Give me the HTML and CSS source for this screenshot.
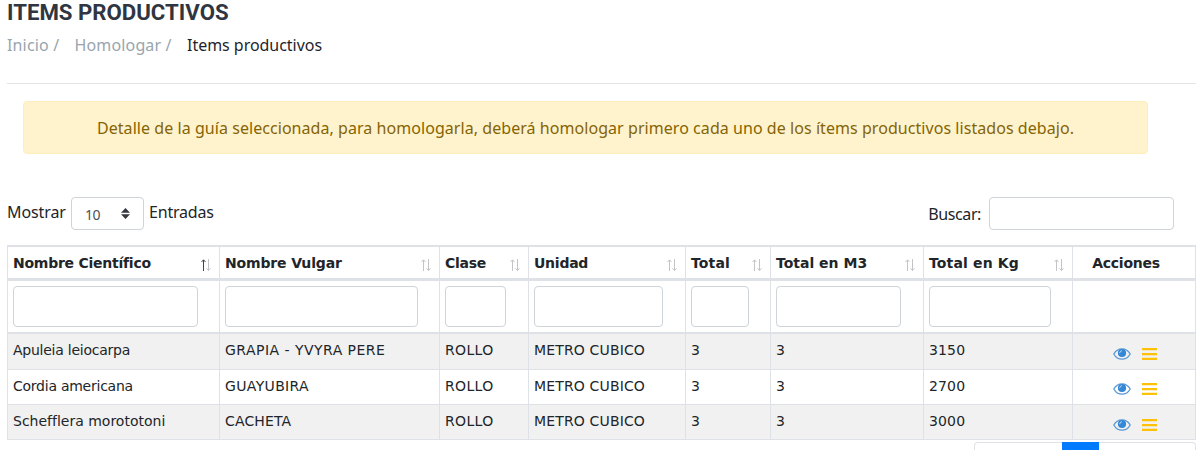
FILE: index.html
```
<!DOCTYPE html>
<html lang="es">
<head>
<meta charset="utf-8">
<title>Items productivos</title>
<link rel="stylesheet" href="styles.css">
</head>
<body>
<svg class="sprite" width="0" height="0" aria-hidden="true">
  <symbol id="sort" viewBox="0 0 11 13">
    <path class="up" d="M2.5 12V1M.5 3 2.5 .8l2 2.200"/>
    <path class="down" d="M7.500 0v11.500M5.500 9.300l2 2.200 2-2.200"/>
  </symbol>
  <symbol id="eye" viewBox="0 0 18 12">
    <path d="M.8 6C2.700 2.600 5.600.8 9 .8S15.300 2.600 17.200 6C15.300 9.400 12.400 11.200 9 11.200S2.700 9.400.8 6z" fill="none" stroke="#5a97d6" stroke-width="1.300"/>
    <circle cx="9" cy="5" r="4.100" fill="#3387d6"/>
    <path d="M6.800 5.200C6.800 3.700 7.700 2.800 9 2.800" fill="none" stroke="#c5def5" stroke-width="1"/>
  </symbol>
  <symbol id="bars" viewBox="0 0 15 12">
    <path d="M0 0h15v2.300H0zM0 4.900h15v2.300H0zM0 9.700h15v2.300H0z" fill="#ffc107"/>
  </symbol>
</svg>
<main class="page">
  <h1 class="title">ITEMS PRODUCTIVOS</h1>
  <nav class="crumbs"><a class="c1">Inicio /</a><a class="c2">Homologar /</a><span class="c3">Items productivos</span></nav>
  <hr class="rule">
  <div class="alert"><span>Detalle de la guía seleccionada, para homologarla, deberá homologar primero cada uno de los ítems productivos listados debajo.</span></div>
  <div class="controls">
    <label class="length"><span class="show">Mostrar</span>
      <span class="select">10<svg width="9" height="11" viewBox="0 0 9 11"><path d="M4.500 0 9 4.700H0zM4.500 11 0 6.200h9z" fill="#343a40"/></svg></span>
      <span class="entries">Entradas</span></label>
    <label class="search"><span>Buscar:</span><input type="text"></label>
  </div>
  <div class="table">
    <div class="row head">
      <div><b class="tight">Nombre Científico</b><svg class="sort asc"><use href="#sort"/></svg></div>
      <div><b class="snug">Nombre Vulgar</b><svg class="sort"><use href="#sort"/></svg></div>
      <div><b class="tight">Clase</b><svg class="sort"><use href="#sort"/></svg></div>
      <div><b class="tight">Unidad</b><svg class="sort"><use href="#sort"/></svg></div>
      <div><b class="loose">Total</b><svg class="sort"><use href="#sort"/></svg></div>
      <div><b>Total en M3</b><svg class="sort"><use href="#sort"/></svg></div>
      <div><b class="loose">Total en Kg</b><svg class="sort"><use href="#sort"/></svg></div>
      <div class="actions-head"><b class="tight">Acciones</b></div>
    </div>
    <div class="row filters">
      <div><input type="text"></div><div><input type="text"></div><div class="narrow"><input type="text"></div><div class="narrow"><input type="text"></div><div><input type="text"></div><div class="narrow"><input type="text"></div><div><input type="text"></div><div></div>
    </div>
    <div class="row data odd first">
      <div class="tight">Apuleia leiocarpa</div><div class="wide">GRAPIA - YVYRA PERE</div><div class="caps">ROLLO</div><div class="loose">METRO CUBICO</div><div>3</div><div>3</div><div class="loose">3150</div>
      <div class="actions"><svg class="eye"><use href="#eye"/></svg><svg class="bars"><use href="#bars"/></svg></div>
    </div>
    <div class="row data second">
      <div class="tight">Cordia americana</div><div class="caps">GUAYUBIRA</div><div class="caps">ROLLO</div><div class="loose">METRO CUBICO</div><div>3</div><div>3</div><div class="loose">2700</div>
      <div class="actions"><svg class="eye"><use href="#eye"/></svg><svg class="bars"><use href="#bars"/></svg></div>
    </div>
    <div class="row data odd">
      <div>Schefflera morototoni</div><div class="loose">CACHETA</div><div class="caps">ROLLO</div><div class="loose">METRO CUBICO</div><div>3</div><div>3</div><div class="loose">3000</div>
      <div class="actions"><svg class="eye"><use href="#eye"/></svg><svg class="bars"><use href="#bars"/></svg></div>
    </div>
  </div>
  <div class="pager"><span class="prev"></span><span class="current"></span><span class="next"></span></div>
</main>
</body>
</html>
```
FILE: styles.css
```
* { box-sizing: border-box; }
body { margin: 0; height: 450px; overflow: hidden; background: #fff; color: #212529; font: 16px/24px "Noto Sans", "Open Sans", sans-serif; }
.sprite { position: absolute; }
.page { display: flex; flex-direction: column; height: 450px; overflow: hidden; padding: 0 4px 0 7px; }
.page > * { flex-shrink: 0; }
.title { margin: 0; height: 33px; font: bold 22.2px/24px Roboto, sans-serif; color: #303641; }
.crumbs { display: flex; height: 24px; color: #99a5ae; letter-spacing: .15px; }
.c1 { width: 67.5px; }
.c2 { width: 112.5px; }
.c3 { color: #1f1f2b; letter-spacing: -.03px; }
.rule { width: 100%; margin: 26px 0 17px; border: 0; border-top: 1px solid #e4e4e4; }
.alert { height: 53px; margin: 0 48px 0 16px; padding: 14px 0; border: 1px solid #ffeeba; border-radius: 4px; background: #fff3cd; color: #856404; text-align: center; white-space: nowrap; letter-spacing: .055px; }
.controls { display: flex; justify-content: space-between; height: 33px; margin: 43px 22px 15px 0; letter-spacing: -.4px; }
.length { display: flex; }
.show { width: 64px; line-height: 31px; letter-spacing: -.1px; }
.select { display: flex; align-items: center; justify-content: space-between; width: 73px; padding: 2px 13px 0; border: 1px solid #ced4da; border-radius: 4px; font-size: 14px; color: #495057; }
.select svg { margin-top: -3px; }
.entries { margin-left: 5px; line-height: 31px; letter-spacing: -.2px; }
.search { display: flex; line-height: 35px; }
.search input { width: 185px; margin-left: 8px; }
input { padding: 0; border: 1px solid #ced4da; border-radius: 4px; background: #fff; }
.table { border-top: 2px solid #dee2e6; font: 14px/20px "DejaVu Sans", Verdana, sans-serif; }
.row { display: grid; grid-template-columns: 212px 220px 89px 157px 85px 153px 149px 124px; height: 35px; border-bottom: 1px solid #dee2e6; white-space: nowrap; }
.row > div { padding-left: 5px; border-left: 1px solid #dee2e6; }
.row > div:last-child { border-right: 1px solid #dee2e6; }
.tight { letter-spacing: -.25px; }
.snug { letter-spacing: -.15px; }
.loose { letter-spacing: .15px; }
.caps { letter-spacing: .35px; }
.wide { letter-spacing: .47px; }
.head { height: 34px; border-bottom-width: 3px; }
.head > div { display: flex; justify-content: space-between; padding-top: 6px; padding-right: 7px; }
.sort { width: 11px; height: 13px; margin-top: 6px; fill: none; --up: #c4c4c8; --down: #c4c4c8; }
.sort.asc { --up: #444; }
.up { stroke: var(--up); }
.down { stroke: var(--down); }
.head .actions-head { justify-content: center; padding: 6px 16px 0 0; }
.filters { height: 53px; border-bottom-width: 2px; }
.filters > div { padding: 5px 21px 0 5px; }
.filters > .narrow { padding-right: 22px; }
.filters input { display: block; width: 100%; height: 41px; }
.data > div { padding-top: 6px; }
.first { height: 36px; }
.odd { background: #f1f1f1; }
.data .actions { display: flex; gap: 11px; padding: 14px 0 0 40px; }
.second .actions { padding-top: 13px; }
.eye { width: 18px; height: 12px; }
.bars { width: 15px; height: 12px; }
.pager { display: flex; align-self: flex-end; width: 222px; height: 8px; margin-top: 2px; border: 1px solid #dee2e6; border-bottom: 0; border-radius: 4px 4px 0 0; }
.prev { width: 87px; }
.current { width: 37px; height: 8px; margin-top: -1px; background: #007bff; }
```
